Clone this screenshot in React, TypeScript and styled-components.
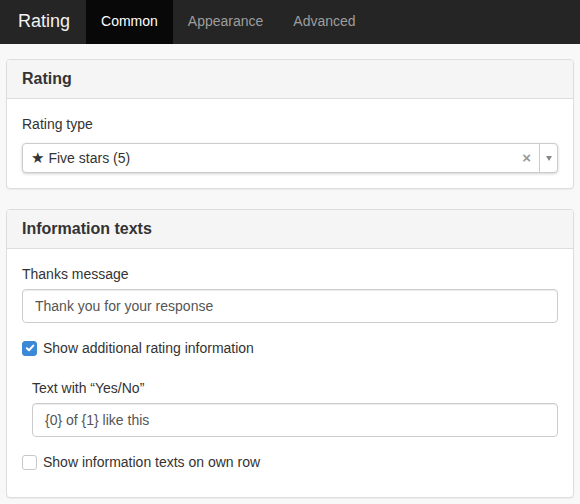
import React from 'react';
import styled, { createGlobalStyle } from 'styled-components';

const GlobalStyle = createGlobalStyle`
  body {
    margin: 0;
    background: #f8f8f8;
    font-family: "Liberation Sans", Arial, Helvetica, sans-serif;
    font-size: 14px;
    line-height: 20px;
    color: #333;
  }
  * { box-sizing: border-box; }
`;

const Navbar = styled.nav`
  display: flex;
  height: 44px;
  background: #252525;
`;

const Brand = styled.div`
  padding: 0 16px 0 18px;
  line-height: 42px;
  font-size: 18px;
  color: #f2f2f2;
`;

const Tab = styled.div<{ active?: boolean }>`
  padding: 0 15px;
  line-height: 42px;
  font-size: 14px;
  color: ${(p) => (p.active ? '#fff' : '#9d9d9d')};
  background: ${(p) => (p.active ? '#080808' : 'transparent')};
`;

const Content = styled.div`
  padding: 15px 6px 0;
`;

const Panel = styled.section`
  background: #fff;
  border: 1px solid #ddd;
  border-radius: 4px;
  margin-bottom: 20px;
  box-shadow: 0 1px 1px rgba(0, 0, 0, 0.05);
  overflow: hidden;
`;

const PanelHeading = styled.div`
  padding: 10px 15px;
  background: #f5f5f5;
  border-bottom: 1px solid #ddd;
`;

const PanelTitle = styled.h3`
  margin: 0;
  font-size: 16px;
  line-height: 18px;
  font-weight: bold;
  color: #333;
`;

const PanelBody = styled.div`
  padding: 15px;
`;

const FormGroup = styled.div<{ last?: boolean }>`
  margin-bottom: ${(p) => (p.last ? '0' : '15px')};
`;

const Label = styled.label`
  display: block;
  margin-bottom: 5px;
  color: #333;
`;

const Input = styled.input`
  display: block;
  width: 100%;
  height: 34px;
  padding: 6px 12px;
  font: inherit;
  color: #555;
  background: #fff;
  border: 1px solid #ccc;
  border-radius: 4px;
  box-shadow: inset 0 1px 1px rgba(0, 0, 0, 0.075);
  outline: none;
`;

const Select = styled.div`
  display: flex;
  align-items: stretch;
  height: 30px;
  margin-top: 9px;
  background: #fff;
  border: 1px solid #ccc;
  border-radius: 4px;
  box-shadow: 0 1px 3px rgba(0, 0, 0, 0.18);
`;

const SelectValue = styled.div`
  flex: 1;
  display: flex;
  align-items: center;
  gap: 4px;
  padding-left: 8px;
  color: #333;
`;

const Star = styled.span`
  font-family: "DejaVu Sans", sans-serif;
  font-size: 15px;
`;

const Clear = styled.span`
  display: flex;
  align-items: center;
  padding: 0 8px 0 4px;
  color: #999;
  font-weight: bold;
  font-size: 15px;
`;

const Arrow = styled.span`
  width: 18px;
  border-left: 1px solid #ccc;
  display: flex;
  align-items: center;
  justify-content: center;

  &::after {
    content: '';
    border-left: 3.5px solid transparent;
    border-right: 3.5px solid transparent;
    border-top: 5px solid #888;
  }
`;

const CheckRow = styled.label<{ top?: number }>`
  display: flex;
  align-items: center;
  gap: 6px;
  height: 20px;
  margin: ${(p) => (p.top ?? 10)}px 0 10px;
  color: #333;
`;

const Box = styled.span<{ checked?: boolean }>`
  width: 15px;
  height: 15px;
  border-radius: 3px;
  display: flex;
  align-items: center;
  justify-content: center;
  background: ${(p) => (p.checked ? '#3a88d6' : '#fff')};
  border: 1px solid ${(p) => (p.checked ? '#3a88d6' : '#c8c8c8')};
`;

const Indented = styled.div`
  padding: 10px 0 0 10px;
`;

const Checkbox: React.FC<{ checked?: boolean; label: string; top?: number }> = ({ checked, label, top }) => (
  <CheckRow top={top}>
    <Box checked={checked}>
      {checked && (
        <svg width="10" height="10" viewBox="0 0 10 10">
          <path d="M1.8 5.2 L4 7.3 L8.3 2.6" fill="none" stroke="#fff" strokeWidth="2" strokeLinecap="round" strokeLinejoin="round" />
        </svg>
      )}
    </Box>
    {label}
  </CheckRow>
);

export default function App() {
  return (
    <>
      <GlobalStyle />
      <Navbar>
        <Brand>Rating</Brand>
        <Tab active>Common</Tab>
        <Tab>Appearance</Tab>
        <Tab>Advanced</Tab>
      </Navbar>
      <Content>
        <Panel>
          <PanelHeading>
            <PanelTitle>Rating</PanelTitle>
          </PanelHeading>
          <PanelBody>
            <FormGroup last>
              <Label>Rating type</Label>
              <Select>
                <SelectValue>
                  <Star>★</Star>
                  Five stars (5)
                </SelectValue>
                <Clear>×</Clear>
                <Arrow />
              </Select>
            </FormGroup>
          </PanelBody>
        </Panel>
        <Panel>
          <PanelHeading>
            <PanelTitle>Information texts</PanelTitle>
          </PanelHeading>
          <PanelBody>
            <FormGroup>
              <Label>Thanks message</Label>
              <Input defaultValue="Thank you for your response" />
            </FormGroup>
            <Checkbox checked label="Show additional rating information" top={0} />
            <Indented>
              <FormGroup>
                <Label>Text with “Yes/No”</Label>
                <Input defaultValue="{0} of {1} like this" />
              </FormGroup>
            </Indented>
            <Checkbox label="Show information texts on own row" top={0} />
          </PanelBody>
        </Panel>
      </Content>
    </>
  );
}
